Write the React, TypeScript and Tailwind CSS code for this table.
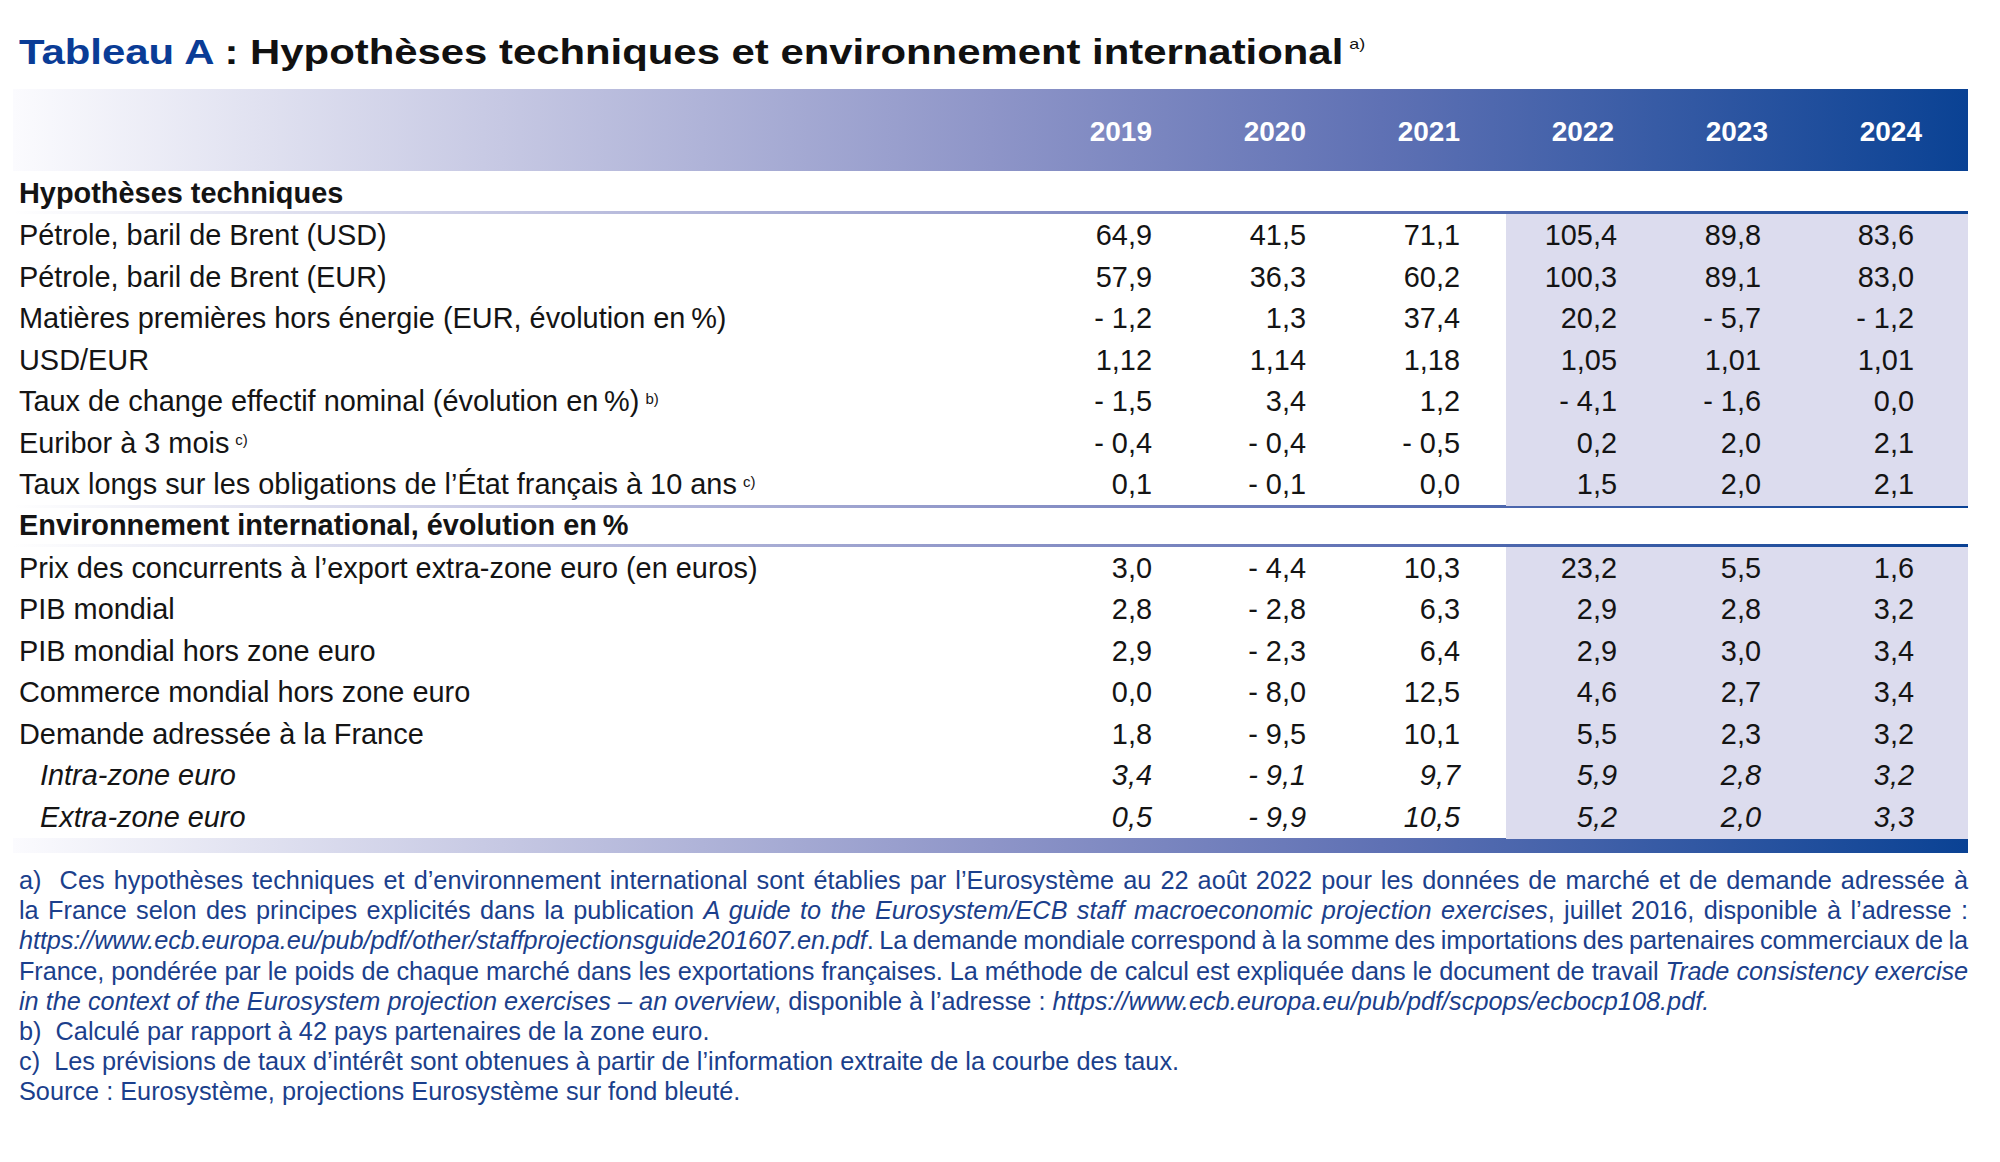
import React from "react";

type RowData = {
  label: React.ReactNode;
  vals: string[];
  italic?: boolean;
};

const block1: RowData[] = [
  { label: "Pétrole, baril de Brent (USD)", vals: ["64,9", "41,5", "71,1", "105,4", "89,8", "83,6"] },
  { label: "Pétrole, baril de Brent (EUR)", vals: ["57,9", "36,3", "60,2", "100,3", "89,1", "83,0"] },
  {
    label: "Matières premières hors énergie (EUR, évolution en\u2009%)",
    vals: ["- 1,2", "1,3", "37,4", "20,2", "- 5,7", "- 1,2"],
  },
  { label: "USD/EUR", vals: ["1,12", "1,14", "1,18", "1,05", "1,01", "1,01"] },
  {
    label: (
      <>
        Taux de change effectif nominal (évolution en{"\u2009"}%)
        <sup className="text-[15px] ml-[6px]">b)</sup>
      </>
    ),
    vals: ["- 1,5", "3,4", "1,2", "- 4,1", "- 1,6", "0,0"],
  },
  {
    label: (
      <>
        Euribor à 3 mois<sup className="text-[15px] ml-[6px]">c)</sup>
      </>
    ),
    vals: ["- 0,4", "- 0,4", "- 0,5", "0,2", "2,0", "2,1"],
  },
  {
    label: (
      <>
        Taux longs sur les obligations de l’État français à 10 ans
        <sup className="text-[15px] ml-[6px]">c)</sup>
      </>
    ),
    vals: ["0,1", "- 0,1", "0,0", "1,5", "2,0", "2,1"],
  },
];

const block2: RowData[] = [
  {
    label: "Prix des concurrents à l’export extra-zone euro (en euros)",
    vals: ["3,0", "- 4,4", "10,3", "23,2", "5,5", "1,6"],
  },
  { label: "PIB mondial", vals: ["2,8", "- 2,8", "6,3", "2,9", "2,8", "3,2"] },
  { label: "PIB mondial hors zone euro", vals: ["2,9", "- 2,3", "6,4", "2,9", "3,0", "3,4"] },
  { label: "Commerce mondial hors zone euro", vals: ["0,0", "- 8,0", "12,5", "4,6", "2,7", "3,4"] },
  { label: "Demande adressée à la France", vals: ["1,8", "- 9,5", "10,1", "5,5", "2,3", "3,2"] },
  { label: "Intra-zone euro", vals: ["3,4", "- 9,1", "9,7", "5,9", "2,8", "3,2"], italic: true },
  { label: "Extra-zone euro", vals: ["0,5", "- 9,9", "10,5", "5,2", "2,0", "3,3"], italic: true },
];

const years = ["2019", "2020", "2021", "2022", "2023", "2024"];

const cellClasses = [
  "flex items-center justify-end pr-[46px] whitespace-nowrap",
  "flex items-center justify-end pr-[46px] whitespace-nowrap",
  "flex items-center justify-end pr-[46px] whitespace-nowrap",
  "flex items-center justify-end pr-[43px] bg-[#dcdcee] whitespace-nowrap",
  "flex items-center justify-end pr-[53px] bg-[#dcdcee] whitespace-nowrap",
  "flex items-center justify-end pr-[54px] bg-[#dcdcee] whitespace-nowrap",
];

function DataRow({ row }: { row: RowData }) {
  return (
    <div className="grid grid-cols-[1031px_repeat(6,154px)] h-[41.5px]">
      <div
        className={
          row.italic
            ? "flex items-center pl-[27px] italic whitespace-nowrap"
            : "flex items-center pl-[6px] whitespace-nowrap"
        }
      >
        <span>{row.label}</span>
      </div>
      {row.vals.map((v, i) => (
        <div key={i} className={cellClasses[i]}>
          <span className={row.italic ? "italic" : ""}>{v}</span>
        </div>
      ))}
    </div>
  );
}

function GradLine() {
  return (
    <div className="h-[3px] bg-[linear-gradient(to_right,#ffffff_0%,#c6c8e3_25%,#8e95c8_50%,#5f71b4_70%,#0a4294_100%)]" />
  );
}

export default function App() {
  return (
    <div className="w-[2000px] h-[1162px] bg-white font-['Liberation_Sans',Arial,sans-serif] text-[#141414] overflow-hidden">
      {/* Title */}
      <div className="pt-[34px] pl-[19px] h-[89px]">
        <h1 className="inline-block origin-left scale-x-[1.196] text-[35px] leading-[35px] font-bold whitespace-nowrap text-[#111111]">
          <span className="text-[#0a3c96]">Tableau A</span> : Hypothèses techniques et environnement international
          <sup className="text-[15px] font-normal ml-[5px] top-[-1em]">a)</sup>
        </h1>
      </div>

      <div className="ml-[13px] w-[1955px] text-[28.9px]">
        {/* Header band */}
        <div className="grid grid-cols-[1031px_repeat(6,154px)] h-[82px] bg-[linear-gradient(to_right,#fbfbfe_0%,#c6c8e3_25%,#8e95c8_50%,#5f71b4_70%,#0a4294_100%)]">
          <div />
          {years.map((y) => (
            <div key={y} className="flex items-center justify-end pr-[46px] pt-[4px] text-white font-bold text-[28px]">
              {y}
            </div>
          ))}
        </div>

        <div className="h-[40px] flex items-center pl-[6px] pt-[6px] font-bold whitespace-nowrap">Hypothèses techniques</div>
        <GradLine />
        {block1.map((r, i) => (
          <DataRow key={i} row={r} />
        ))}
        <GradLine />
        <div className="h-[36px] flex items-center pl-[6px] font-bold whitespace-nowrap">
          Environnement international, évolution en{"\u2009"}%
        </div>
        <GradLine />
        {block2.map((r, i) => (
          <DataRow key={i} row={r} />
        ))}
        <div className="mt-[1px] h-[15px] bg-[linear-gradient(to_right,#fbfbfe_0%,#c6c8e3_25%,#8e95c8_50%,#5f71b4_70%,#0a4294_100%)]" />
      </div>

      {/* Footnotes */}
      <div className="mt-[12px] ml-[19px] w-[1949px] text-[25.3px] leading-[30.2px] text-[#1b3f8c]">
        <div className="text-justify [text-align-last:justify] whitespace-nowrap">
          a){"\u00A0 "}Ces hypothèses techniques et d’environnement international sont établies par l’Eurosystème au 22 août 2022 pour les données de marché et de demande adressée à
        </div>
        <div className="text-justify [text-align-last:justify] whitespace-nowrap">
          la France selon des principes explicités dans la publication <i>A guide to the Eurosystem/ECB staff macroeconomic projection exercises</i>, juillet 2016, disponible à l’adresse :
        </div>
        <div className="text-justify [text-align-last:justify] whitespace-nowrap [word-spacing:-2px] tracking-[-0.1px]">
          <i>https://www.ecb.europa.eu/pub/pdf/other/staffprojectionsguide201607.en.pdf</i>. La demande mondiale correspond à la somme des importations des partenaires commerciaux de la
        </div>
        <div className="text-justify [text-align-last:justify] whitespace-nowrap [word-spacing:-2px] tracking-[-0.1px]">
          France, pondérée par le poids de chaque marché dans les exportations françaises. La méthode de calcul est expliquée dans le document de travail <i>Trade consistency exercise</i>
        </div>
        <div className="whitespace-nowrap">
          <i>in the context of the Eurosystem projection exercises – an overview</i>, disponible à l’adresse : <i>https://www.ecb.europa.eu/pub/pdf/scpops/ecbocp108.pdf.</i>
        </div>
        <div className="whitespace-nowrap">b){"\u00A0 "}Calculé par rapport à 42 pays partenaires de la zone euro.</div>
        <div className="whitespace-nowrap">
          c){"\u00A0 "}Les prévisions de taux d’intérêt sont obtenues à partir de l’information extraite de la courbe des taux.
        </div>
        <div className="whitespace-nowrap">Source : Eurosystème, projections Eurosystème sur fond bleuté.</div>
      </div>
    </div>
  );
}
